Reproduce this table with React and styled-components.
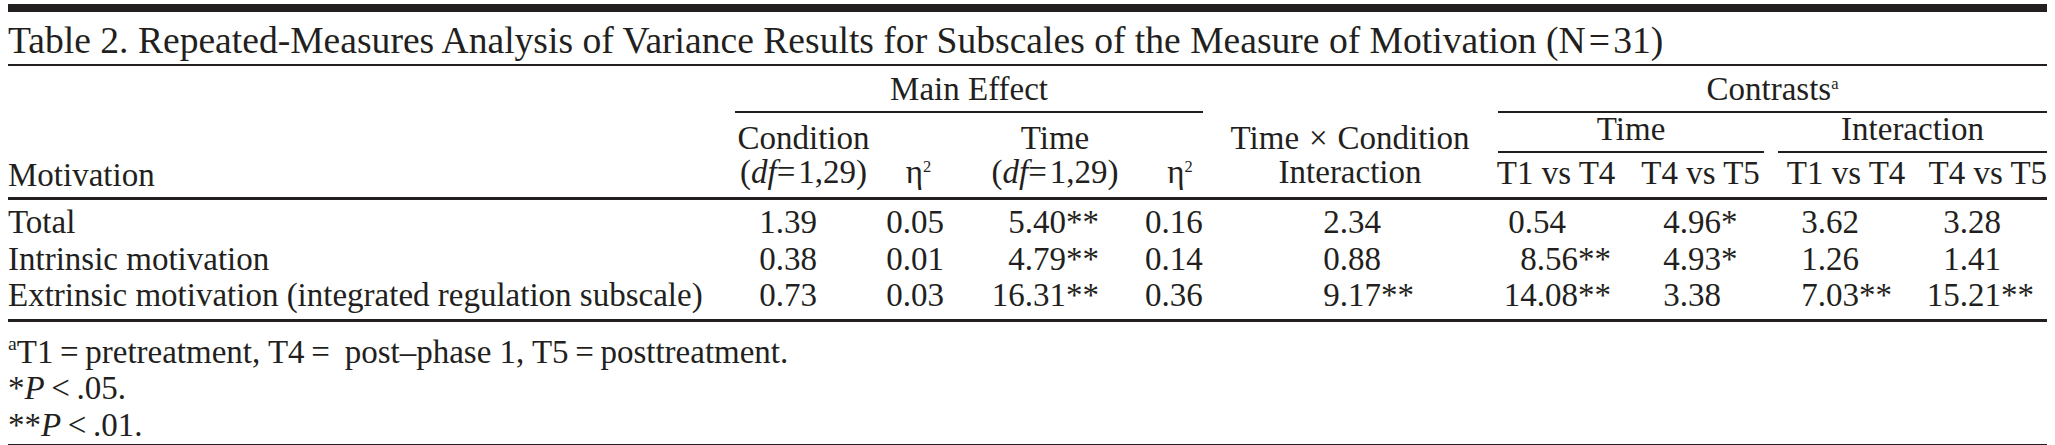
import React from 'react';
import styled, { createGlobalStyle } from 'styled-components';

const INK = '#231f20';

const GlobalStyle = createGlobalStyle`
  html, body {
    margin: 0;
    padding: 0;
    background: #ffffff;
  }
  body {
    font-family: "Liberation Serif", "Times New Roman", serif;
    color: ${INK};
  }
`;

const Page = styled.div`
  padding: 4px 8px 0 8px;
`;

const TopBar = styled.div`
  height: 8px;
  background: ${INK};
`;

const Title = styled.div`
  font-size: 37.6px;
  line-height: 46px;
  padding-top: 6px;
  border-bottom: 2px solid ${INK};
  white-space: nowrap;
`;

const Table = styled.table`
  width: 100%;
  table-layout: fixed;
  border-collapse: collapse;
  font-size: 33px;

  thead {
    border-bottom: 3px solid ${INK};
  }
  tbody {
    border-bottom: 3px solid ${INK};
  }
  tbody tr:first-child td {
    padding-top: 4px;
  }
  tbody tr:last-child td {
    padding-bottom: 5px;
  }
`;

const Col = styled.col`
  width: ${(p) => p.$w}px;
`;

const Th = styled.th`
  font-weight: normal;
  white-space: nowrap;
  vertical-align: bottom;
  text-align: ${(p) => p.$align || 'center'};
  line-height: ${(p) => p.$lh || 33}px;
  padding: ${(p) => p.$pt || 0}px 0 ${(p) => p.$pb || 0}px 0;
`;

const Rule = styled.div`
  border-bottom: 2px solid ${INK};
  text-align: center;
  padding-bottom: ${(p) => p.$pb || 0}px;
  margin-left: ${(p) => p.$ml || 0}px;
  margin-right: ${(p) => p.$mr || 0}px;
`;

const Label = styled.td`
  text-align: left;
  line-height: 36.5px;
  white-space: nowrap;
  padding: 0;
`;

const Num = styled.td`
  text-align: right;
  line-height: 36.5px;
  white-space: nowrap;
  padding: 0 ${(p) => p.$pr}px 0 0;
`;

const Stars = styled.span`
  display: inline-block;
  width: 0;
  white-space: nowrap;
`;

const Sup = styled.sup`
  font-size: ${(p) => p.$size || 0.5}em;
  line-height: 0;
  vertical-align: 0.65em;
`;

const I = styled.i`
  font-style: italic;
`;

const Op = styled.span`
  margin: 0 0.3em;
`;

const Notes = styled.div`
  font-size: 33px;
  line-height: 36.5px;
  padding: 12px 0 1px 0;
  border-bottom: 2px solid ${INK};
`;

const Note = styled.div`
  white-space: nowrap;
`;

const cols = [727, 137, 93, 180, 70, 270, 142, 147, 144, 129];
// distance from the right edge of each value column to the last digit
const pads = [55, 21, 79, 15, 104, 49, 53, 59, 46];

const rows = [
  {
    label: 'Total',
    values: ['1.39', '0.05', '5.40**', '0.16', '2.34', '0.54', '4.96*', '3.62', '3.28'],
    shift: { 5: 12 },
  },
  {
    label: 'Intrinsic motivation',
    values: ['0.38', '0.01', '4.79**', '0.14', '0.88', '8.56**', '4.93*', '1.26', '1.41'],
  },
  {
    label: 'Extrinsic motivation (integrated regulation subscale)',
    values: ['0.73', '0.03', '16.31**', '0.36', '9.17**', '14.08**', '3.38', '7.03**', '15.21**'],
  },
];

const Value = ({ text, pr }) => {
  const m = text.match(/^([\d.]+)(\**)$/);
  return (
    <Num $pr={pr}>
      {m[1]}
      <Stars>{m[2]}</Stars>
    </Num>
  );
};

const Df = () => (
  <>
    (<I>df</I>=&#8202;1,29)
  </>
);

export default function App() {
  return (
    <>
      <GlobalStyle />
      <Page>
        <TopBar />
        <Title>
          Table 2. Repeated-Measures Analysis of Variance Results for Subscales of the Measure of
          Motivation (N&#8202;=&#8202;31)
        </Title>
        <Table>
          <colgroup>
            {cols.map((w, i) => (
              <Col key={i} $w={w} />
            ))}
          </colgroup>
          <thead>
            <tr>
              <Th rowSpan={3} $align="left" $pb={5}>
                Motivation
              </Th>
              <Th colSpan={4} $pt={7}>
                <Rule $mr={12} $pb={5}>
                  Main Effect
                </Rule>
              </Th>
              <Th rowSpan={3} $lh={34} $pb={8}>
                Time<Op>×</Op>Condition
                <br />
                Interaction
              </Th>
              <Th colSpan={4} $pt={7}>
                <Rule $ml={13} $pb={5}>
                  Contrasts<Sup>a</Sup>
                </Rule>
              </Th>
            </tr>
            <tr>
              <Th rowSpan={2} $lh={34} $pb={8}>
                Condition
                <br />
                <Df />
              </Th>
              <Th rowSpan={2} $lh={34} $pb={8}>
                η<Sup>2</Sup>
              </Th>
              <Th rowSpan={2} $lh={34} $pb={8}>
                Time
                <br />
                <Df />
              </Th>
              <Th rowSpan={2} $lh={34} $pb={8}>
                η<Sup>2</Sup>
              </Th>
              <Th colSpan={2}>
                <Rule $ml={13} $mr={10} $pb={5}>
                  Time
                </Rule>
              </Th>
              <Th colSpan={2}>
                <Rule $ml={4} $pb={5}>
                  Interaction
                </Rule>
              </Th>
            </tr>
            <tr>
              <Th $pt={4} $pb={7}>T1 vs T4</Th>
              <Th $pt={4} $pb={7}>T4 vs T5</Th>
              <Th $pt={4} $pb={7}>T1 vs T4</Th>
              <Th $pt={4} $pb={7} $align="right">T4 vs T5</Th>
            </tr>
          </thead>
          <tbody>
            {rows.map((r) => (
              <tr key={r.label}>
                <Label>{r.label}</Label>
                {r.values.map((v, i) => (
                  <Value key={i} text={v} pr={pads[i] + ((r.shift && r.shift[i]) || 0)} />
                ))}
              </tr>
            ))}
          </tbody>
        </Table>
        <Notes>
          <Note>
            <Sup $size={0.6}>a</Sup>T1&#8201;=&#8201;pretreatment, T4&#8201;=&#8201; post–phase 1, T5&#8201;=&#8201;posttreatment.
          </Note>
          <Note>
            *<I>P</I>&#8201;&lt;&#8201;.05.
          </Note>
          <Note>
            **<I>P</I>&#8201;&lt;&#8201;.01.
          </Note>
        </Notes>
      </Page>
    </>
  );
}
